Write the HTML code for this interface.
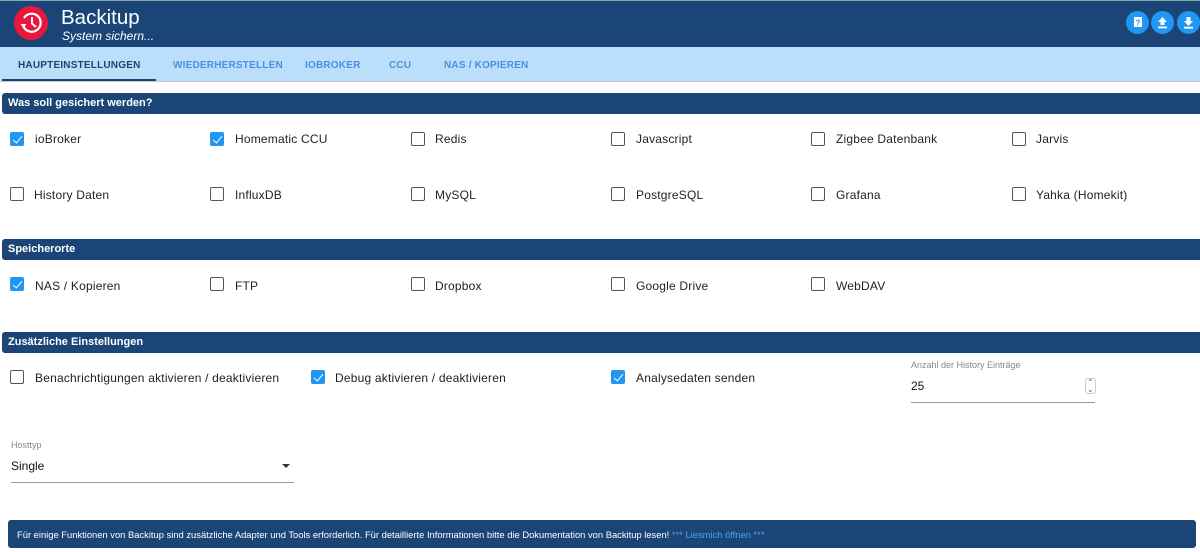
<!DOCTYPE html>
<html><head><meta charset="utf-8"><style>
*{box-sizing:border-box;margin:0;padding:0}
body{width:1200px;height:552px;overflow:hidden;background:#fff;font-family:"Liberation Sans","DejaVu Sans",sans-serif;position:relative;color:#222}
.a{position:absolute}
.hdr{left:0;top:0;width:1200px;height:47px;background:#1a4576;border-top:1px solid #8aa}
.tabs{left:0;top:47px;width:1200px;height:35px;background:#bbdefb;border-bottom:1px solid #c8c8c8}
.tab{position:absolute;top:60px;font-size:10px;font-weight:bold;color:#4a90e2;letter-spacing:.2px}
.sec{left:2px;width:1198px;height:21px;background:#1a4576;border-radius:3px 0 0 3px;color:#fff;font-size:11px;font-weight:bold;padding:4px 0 0 6px;letter-spacing:0}
.cb{position:absolute;width:14px;height:14px;border:1.5px solid #555;border-radius:2px;background:#fff}
.cb.on{background:#2196f3;border-color:#2196f3}
.cb.on:after{content:"";position:absolute;left:3.5px;top:0.5px;width:4px;height:8px;border:solid #fff;border-width:0 1.5px 1.5px 0;transform:rotate(40deg)}
.lb{position:absolute;font-size:12px;color:#222;letter-spacing:.2px}
.btn{position:absolute;top:11px;width:23px;height:23px;border-radius:50%;background:#2196f3}
</style></head><body>
<div class="a hdr"></div>
<svg class="a" style="left:14px;top:6px" width="34" height="34" viewBox="0 0 34 34">
<circle cx="17" cy="17" r="17" fill="#e8173b"/>
<path d="M9.5 20.5 A9 9 0 1 0 10 12" fill="none" stroke="#fff" stroke-width="2.2"/>
<path d="M6.5 18 L9.5 22 L12.5 18 Z" fill="#fff"/>
<path d="M18 11 V17.5 L22 21" fill="none" stroke="#fff" stroke-width="2"/>
</svg>
<div class="a" style="left:61px;top:6px;font-size:20.5px;color:#fff">Backitup</div>
<div class="a" style="left:62px;top:29px;font-size:12px;color:#fff;font-style:italic;letter-spacing:0">System sichern...</div>
<div class="btn" style="left:1126px"><svg width="23" height="23"><rect x="8" y="6" width="8" height="10" fill="#fff"/><text x="12" y="14.5" font-size="8" font-weight="bold" text-anchor="middle" fill="#2196f3" font-family="Liberation Sans">?</text></svg></div>
<div class="btn" style="left:1151px"><svg width="23" height="23"><path d="M11.5 6 L16 11 H13.5 V14 H9.5 V11 H7 Z" fill="#fff"/><rect x="7" y="15.5" width="9" height="1.8" fill="#fff"/></svg></div>
<div class="btn" style="left:1177px"><svg width="23" height="23"><path d="M11.5 15 L16 10 H13.5 V6 H9.5 V10 H7 Z" fill="#fff"/><rect x="7" y="15.8" width="9" height="1.8" fill="#fff"/></svg></div>
<div class="a tabs"></div>
<div class="tab" style="left:18px;color:#1a4576">HAUPTEINSTELLUNGEN</div>
<div class="a" style="left:2px;top:79px;width:154px;height:2px;background:#1a4576"></div>
<div class="tab" style="left:173px">WIEDERHERSTELLEN</div>
<div class="tab" style="left:305px">IOBROKER</div>
<div class="tab" style="left:389px">CCU</div>
<div class="tab" style="left:444px">NAS / KOPIEREN</div>

<div class="a sec" style="top:93px">Was soll gesichert werden?</div>
<div class="a sec" style="top:239px">Speicherorte</div>
<div class="a sec" style="top:332px">Zusätzliche Einstellungen</div>

<div class="cb on" style="left:10px;top:132px"></div><div class="lb" style="left:35px;top:132px">ioBroker</div>
<div class="cb on" style="left:210px;top:132px"></div><div class="lb" style="left:235px;top:132px">Homematic CCU</div>
<div class="cb" style="left:411px;top:132px"></div><div class="lb" style="left:435px;top:132px">Redis</div>
<div class="cb" style="left:611px;top:132px"></div><div class="lb" style="left:636px;top:132px">Javascript</div>
<div class="cb" style="left:811px;top:132px"></div><div class="lb" style="left:836px;top:132px">Zigbee Datenbank</div>
<div class="cb" style="left:1012px;top:132px"></div><div class="lb" style="left:1036px;top:132px">Jarvis</div>

<div class="cb" style="left:10px;top:187px"></div><div class="lb" style="left:34px;top:188px">History Daten</div>
<div class="cb" style="left:210px;top:187px"></div><div class="lb" style="left:235px;top:188px">InfluxDB</div>
<div class="cb" style="left:411px;top:187px"></div><div class="lb" style="left:435px;top:188px">MySQL</div>
<div class="cb" style="left:611px;top:187px"></div><div class="lb" style="left:636px;top:188px">PostgreSQL</div>
<div class="cb" style="left:811px;top:187px"></div><div class="lb" style="left:836px;top:188px">Grafana</div>
<div class="cb" style="left:1012px;top:187px"></div><div class="lb" style="left:1036px;top:188px">Yahka (Homekit)</div>

<div class="cb on" style="left:10px;top:277px"></div><div class="lb" style="left:35px;top:279px">NAS / Kopieren</div>
<div class="cb" style="left:210px;top:277px"></div><div class="lb" style="left:235px;top:279px">FTP</div>
<div class="cb" style="left:411px;top:277px"></div><div class="lb" style="left:435px;top:279px">Dropbox</div>
<div class="cb" style="left:611px;top:277px"></div><div class="lb" style="left:636px;top:279px">Google Drive</div>
<div class="cb" style="left:811px;top:277px"></div><div class="lb" style="left:836px;top:279px">WebDAV</div>

<div class="cb" style="left:10px;top:370px"></div><div class="lb" style="left:35px;top:371px">Benachrichtigungen aktivieren / deaktivieren</div>
<div class="cb on" style="left:311px;top:370px"></div><div class="lb" style="left:335px;top:371px">Debug aktivieren / deaktivieren</div>
<div class="cb on" style="left:611px;top:370px"></div><div class="lb" style="left:636px;top:371px">Analysedaten senden</div>

<div class="a" style="left:911px;top:360px;font-size:9px;color:#888">Anzahl der History Einträge</div>
<div class="a" style="left:911px;top:379px;font-size:12px;color:#111">25</div>
<div class="a" style="left:1085px;top:378px;font-size:8px;color:#555;line-height:7px;border:1px solid #ccc;border-radius:3px;padding:0 1px">⌃<br>⌄</div>
<div class="a" style="left:911px;top:402px;width:184px;height:1px;background:#999"></div>

<div class="a" style="left:11px;top:440px;font-size:9px;color:#888">Hosttyp</div>
<div class="a" style="left:11px;top:459px;font-size:12px;color:#111">Single</div>
<div class="a" style="left:282px;top:464px;width:0;height:0;border-left:4px solid transparent;border-right:4px solid transparent;border-top:4px solid #333"></div>
<div class="a" style="left:11px;top:482px;width:283px;height:1px;background:#999"></div>

<div class="a" style="left:8px;top:520px;width:1188px;height:28px;background:#1a4576;border-radius:3px;color:#fff;font-size:9.4px;padding:9px 0 0 9px;white-space:nowrap">Für einige Funktionen von Backitup sind zusätzliche Adapter und Tools erforderlich. Für detaillierte Informationen bitte die Dokumentation von Backitup lesen! <span style="color:#4aa3f0">*** Liesmich öffnen ***</span></div>
</body></html>
